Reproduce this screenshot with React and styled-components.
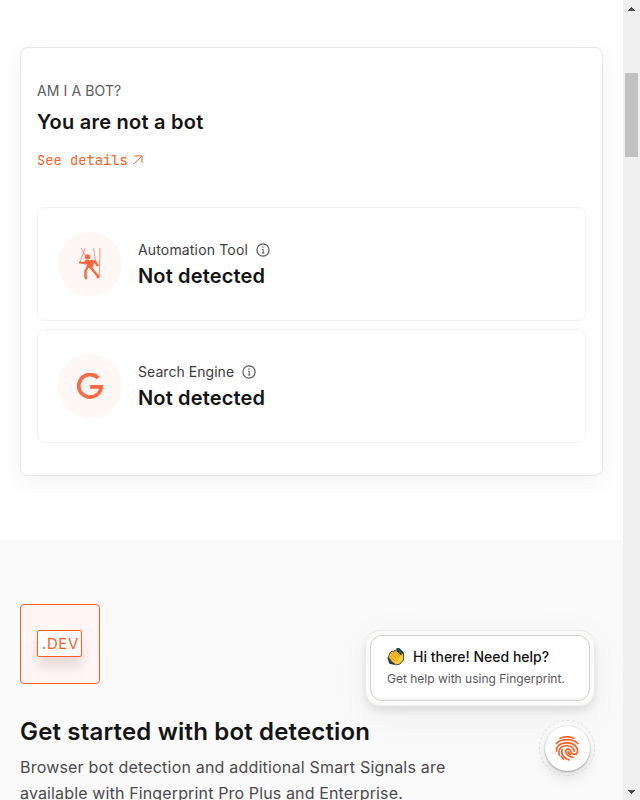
import React from "react";
import styled, { createGlobalStyle } from "styled-components";

const GlobalStyle = createGlobalStyle`
  * { box-sizing: border-box; }
  html, body { margin: 0; height: 100%; overflow: hidden; }
  body { font-family: Inter, "Liberation Sans", sans-serif; background: #fff; color: #141415; }
  h1, h2, p { margin: 0; }
  svg { display: block; flex: none; }
`;

const Window = styled.div`
  display: flex;
  width: 100%;
  height: 800px;
  overflow: hidden;
`;

const Page = styled.main`
  flex: 1;
  min-width: 0;
  height: 800px;
`;

const Scrollbar = styled.div`
  width: 17px;
  height: 800px;
  padding: 7px 2px 6px;
  background: #f0f0f0;
  display: flex;
  flex-direction: column;
  align-items: center;
`;

const Thumb = styled.div`
  width: 13px;
  height: 84px;
  margin: 62px 0 auto;
  background: #c1c1c1;
`;

const ResultSection = styled.section`
  height: 540px;
  padding: 47px 20px 0;
`;

const Card = styled.div`
  height: 429px;
  padding: 32px 16px;
  border: 1px solid #e6e6e7;
  border-radius: 8px;
  background: #fff;
  box-shadow: 0 6px 22px rgba(0, 0, 0, 0.055);
`;

const Eyebrow = styled.p`
  font-size: 14px;
  line-height: 22px;
  letter-spacing: 0.1px;
  color: #5b5b5e;
`;

const Verdict = styled.h1`
  margin-top: 5px;
  font-size: 20px;
  line-height: 30px;
  font-weight: 600;
  letter-spacing: 0.24px;
`;

const DetailsLink = styled.a`
  display: flex;
  align-items: center;
  gap: 5px;
  margin-top: 12px;
  height: 20px;
  font-family: "JetBrains Mono", "DejaVu Sans Mono", monospace;
  font-size: 13.75px;
  color: #ff5d22;
  white-space: nowrap;

  span { padding-top: 2px; }
`;

const SignalList = styled.div`
  display: grid;
  gap: 8px;
  margin-top: 38px;
`;

const Signal = styled.div`
  display: flex;
  align-items: center;
  gap: 16px;
  height: 114px;
  padding: 0 20px;
  border: 1px solid #f2f2f4;
  border-radius: 8px;
`;

const Circle = styled.div`
  display: grid;
  place-items: center;
  width: 64px;
  height: 64px;
  border-radius: 50%;
  background: #fff7f6;
`;

const SignalLabel = styled.div`
  display: flex;
  align-items: center;
  gap: 8px;
  padding-top: 1px;
  font-size: 14px;
  line-height: 22px;
  letter-spacing: ${({ $tracking }) => $tracking};
  color: #3c3c3f;
`;

const SignalValue = styled.div`
  margin-top: 1px;
  font-size: 20px;
  line-height: 28px;
  font-weight: 600;
  letter-spacing: 0.15px;
`;

const StartSection = styled.section`
  height: 400px;
  padding: 64px 20px;
  background: #fafafa;
`;

const DevTile = styled.div`
  display: flex;
  align-items: flex-start;
  width: 80px;
  height: 80px;
  padding: 25px 16px;
  border: 1px solid #ff5d22;
  border-radius: 4px;
  background: #fff6f5;
`;

const DevTag = styled.div`
  width: 45px;
  height: 27px;
  padding-left: 4px;
  border: 1px solid #ff5d22;
  border-radius: 2px;
  background: #fff;
  box-shadow: 0 10px 14px rgba(40, 20, 10, 0.12);
  color: #ff5d22;
  font-size: 15px;
  line-height: 26px;
  letter-spacing: 0.6px;
`;

const Heading = styled.h2`
  margin-top: 31px;
  font-size: 24px;
  line-height: 34px;
  font-weight: 600;
  letter-spacing: 0.17px;
`;

const Copy = styled.p`
  margin-top: 5px;
  font-size: 16px;
  line-height: 26px;
  letter-spacing: ${({ $tight }) => ($tight ? "0.14px" : "0.2px")};
  color: #4b4b4e;
  white-space: nowrap;

  & + & { margin-top: 0; }
`;

const ChatPrompt = styled.aside`
  position: fixed;
  left: 365px;
  top: 630px;
  width: 230px;
  height: 76px;
  padding: 4px;
  border: 1px solid #e9e9e8;
  border-bottom-color: #f1f1f0;
  border-radius: 15px;
  background: #fafaf8;
  box-shadow: 0 5px 9px rgba(0, 0, 0, 0.09), 0 10px 40px rgba(0, 0, 0, 0.06);
`;

const Bubble = styled.div`
  height: 66px;
  padding: 10px 16px;
  border: 1px solid #d3d3d3;
  border-radius: 12px;
  background: #fff;
  box-shadow: inset 0 -2px 1px #f4f4f4;
`;

const Greeting = styled.div`
  display: flex;
  align-items: center;
  gap: 8px;
  font-size: 14px;
  line-height: 22px;
  font-weight: 500;
  white-space: nowrap;
`;

const PromptText = styled.p`
  font-size: 12px;
  line-height: 21px;
  color: #57575a;
  white-space: nowrap;
`;

const Launcher = styled.button`
  position: fixed;
  left: 539px;
  top: 720px;
  display: grid;
  place-items: center;
  width: 56px;
  height: 56px;
  padding: 0;
  border: 1px dashed #dedede;
  border-radius: 50%;
  background: #fafafa;
`;

const LauncherFace = styled.span`
  display: grid;
  place-items: center;
  width: 45px;
  height: 45px;
  border-radius: 50%;
  background: #fff;
  box-shadow: 0 1px 2px rgba(0, 0, 0, 0.3), 0 7px 14px rgba(0, 0, 0, 0.1), 0 0 0 1px rgba(0, 0, 0, 0.03);
`;

const ArrowUpRight = () => (
  <svg width="10" height="12" viewBox="0 -2 10 12" fill="none" stroke="#ff5d22" strokeWidth="1">
    <path d="M.8 9L8.8 1M1.5 .9H9V7.5" />
  </svg>
);

const Info = () => (
  <svg width="14" height="14" viewBox="0 0 14 14" fill="none" stroke="#57575a" strokeWidth="1.2">
    <circle cx="7" cy="7" r="6.1" />
    <path d="M6 6.5H7.2V10M5.8 10H8.4" strokeWidth="1" />
    <circle cx="7" cy="4.1" r=".75" fill="#57575a" stroke="none" />
  </svg>
);

const Puppet = () => (
  <svg width="24" height="32" viewBox="0 0 24 32" fill="none" stroke="#ff6741">
    <path d="M3.2 0L8 9M7 0L2 14.5M15.5 0L18 16.5M22 0L21.3 29" strokeWidth="1" opacity=".7" />
    <circle cx="9.5" cy="8.9" r="2.7" fill="#ff6741" stroke="none" />
    <path d="M7.5 12L14 12L16.5 14L14.3 20L8.3 20L9 16.2L7 16.5L1 15.2V13.6L6 14Z" fill="#ff6741" stroke="none" />
    <path d="M14 13L17.5 14L20 18M10 18.5L7.5 23V30M12.5 19L16 23.5L20.5 28.5M7 30H9M18.5 29H21.5" strokeWidth="2.4" />
  </svg>
);

const GLogo = () => (
  <svg width="26" height="27" viewBox="0 0 26 27" fill="none" stroke="#ff6741" strokeWidth="3.7">
    <path d="M21.2 5.1A11.25 11.25 0 1 0 24.2 13.9H13.1" />
  </svg>
);

const Clap = () => (
  <svg width="18" height="18" viewBox="0 0 18 18" strokeLinejoin="round">
    <path d="M10 1L12 .8L16 5V7L12 6ZM1.2 10L3 15L7 16L4 11Z" fill="#236273" stroke="#183b43" strokeWidth="1.6" />
    <path d="M3 4.5L5 3L6.5 4L8 2L10 3L14 7L14.5 4.8L16.5 6V12L13 16L9 17L5 14L1.4 9.5L2 7.5Z" fill="#ffbd27" stroke="#332e20" strokeWidth=".8" />
    <path d="M4 5L9 10M6 4L11 9M8 3L13 8M3 8L8 13" stroke="#a6731a" strokeWidth=".5" />
    <path d="M10 15.5L13.7 11L14.7 8" stroke="#ffd64f" strokeWidth="2" fill="none" />
  </svg>
);

const Fingerprint = () => (
  <svg width="24" height="25" viewBox="0 0 24 25" fill="none" stroke="#ff5d22" strokeWidth="1.6">
    <path d="M4.4 2.6C9 .4 15 .4 19.6 2.6" />
    <path d="M.8 8C5.4 2.4 18.6 2.4 23.2 8" />
    <path d="M1.7 15.8C.3 10.5 5.1 6.9 12 6.9C19.3 6.9 23.6 11.9 22.3 16.2C21.3 19.4 17 18.9 16 16C15.4 14.1 14.3 12.9 12.7 12.9C9.1 12.9 10.2 21.1 18.8 21.3" />
    <path d="M4.5 19.8C2.6 14 5.5 9.8 11.8 9.8C16.4 9.8 19 12.3 19.4 15.8" />
    <path d="M14.8 24.1C8.3 22.5 5.5 17 7.3 12.9" />
    <path d="M9.1 23.5C7.9 22.7 6.8 21.6 6 20.2" />
    <path d="M12.8 15.3C13.4 17.4 14.5 18.6 16.5 18.9" />
  </svg>
);

const ScrollArrow = ({ down }) => (
  <svg width="7" height="4" viewBox="0 0 7 4" fill="#505050" shapeRendering="crispEdges">
    <path d={down ? "M0 0H7L3.5 4Z" : "M0 4H7L3.5 0Z"} />
  </svg>
);

const signals = [
  { label: "Automation Tool", tracking: "0.16px", icon: <Puppet /> },
  { label: "Search Engine", tracking: "0.05px", icon: <GLogo /> },
];

export default function App() {
  return (
    <>
      <GlobalStyle />
      <Window>
        <Page>
          <ResultSection>
            <Card>
              <Eyebrow>AM I A BOT?</Eyebrow>
              <Verdict>You are not a bot</Verdict>
              <DetailsLink><span>See details</span><ArrowUpRight /></DetailsLink>
              <SignalList>
                {signals.map(({ label, tracking, icon }) => (
                  <Signal key={label}>
                    <Circle>{icon}</Circle>
                    <div>
                      <SignalLabel $tracking={tracking}>{label}<Info /></SignalLabel>
                      <SignalValue>Not detected</SignalValue>
                    </div>
                  </Signal>
                ))}
              </SignalList>
            </Card>
          </ResultSection>
          <StartSection>
            <DevTile><DevTag>.DEV</DevTag></DevTile>
            <Heading>Get started with bot detection</Heading>
            <Copy>Browser bot detection and additional Smart Signals are</Copy>
            <Copy $tight>available with Fingerprint Pro Plus and Enterprise.</Copy>
          </StartSection>
        </Page>
        <Scrollbar>
          <ScrollArrow />
          <Thumb />
          <ScrollArrow down />
        </Scrollbar>
      </Window>
      <ChatPrompt>
        <Bubble>
          <Greeting><Clap />Hi there! Need help?</Greeting>
          <PromptText>Get help with using Fingerprint.</PromptText>
        </Bubble>
      </ChatPrompt>
      <Launcher aria-label="Open help"><LauncherFace><Fingerprint /></LauncherFace></Launcher>
    </>
  );
}
